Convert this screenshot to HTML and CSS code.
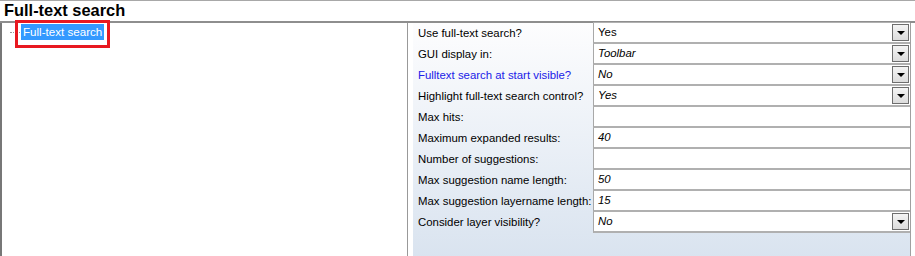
FILE: index.html
```html
<html>
	<head>
		<link rel="stylesheet" href="styles.css">
	</head>
	<body>
		<div class="page">
			<div class="title">Full-text search</div>
			<div class="main">
				<div class="tree">
					<div class="node">
						<span class="dots"></span>
						<span class="mark"><span class="selected">Full-text search</span></span>
					</div>
				</div>
				<div class="props">
					<div class="row">
						<div class="label">Use full-text search?</div>
						<div class="value">Yes<span class="drop"></span></div>
					</div>
					<div class="row">
						<div class="label">GUI display in:</div>
						<div class="value italic">Toolbar<span class="drop"></span></div>
					</div>
					<div class="row">
						<div class="label blue">Fulltext search at start visible?</div>
						<div class="value italic">No<span class="drop"></span></div>
					</div>
					<div class="row">
						<div class="label">Highlight full-text search control?</div>
						<div class="value italic">Yes<span class="drop"></span></div>
					</div>
					<div class="row">
						<div class="label">Max hits:</div>
						<div class="value"></div>
					</div>
					<div class="row">
						<div class="label">Maximum expanded results:</div>
						<div class="value italic">40</div>
					</div>
					<div class="row">
						<div class="label">Number of suggestions:</div>
						<div class="value"></div>
					</div>
					<div class="row">
						<div class="label">Max suggestion name length:</div>
						<div class="value italic">50</div>
					</div>
					<div class="row">
						<div class="label">Max suggestion layername length:</div>
						<div class="value italic">15</div>
					</div>
					<div class="row">
						<div class="label">Consider layer visibility?</div>
						<div class="value italic">No<span class="drop"></span></div>
					</div>
				</div>
			</div>
		</div>
	</body>
</html>
```

FILE: styles.css
```css
body{
	margin: 0;
	font-family: "Liberation Sans", Arial, sans-serif;
	background: #fff;
	color: #000;
}
.page{
	width: 915px;
	height: 256px;
	overflow: hidden;
}
.title{
	height: 20px;
	border-top: 1px solid #a8a8a8;
	border-bottom: 2px solid #8e8e8e;
	font-size: 16.4px;
	font-weight: bold;
	line-height: 19px;
	padding-left: 4px;
}
.main{
	display: flex;
	height: 233px;
}
.tree{
	width: 405px;
	border-left: 2px solid #777;
	border-right: 1px solid #999;
	background: #fff;
}
.node{
	display: flex;
	align-items: flex-start;
	padding-left: 8px;
}
.dots{
	width: 10px;
	border-top: 1px dotted #999;
	margin-top: 9px;
}
.mark{
	position: relative;
	border: 3px solid #e81820;
	padding: 1px 3px 5px 3px;
	margin-top: -3px;
	margin-left: -5px;
}
.selected{
	display: block;
	background: #3399ff;
	color: #fff;
	font-size: 11.6px;
	padding: 0 2px 0 2px;
	line-height: 16px;
}
.props{
	margin-left: 5px;
	width: 497px;
	border-right: 1px solid #a0a0a0;
	background: linear-gradient(#fdfdfe, #d6e1ee);
	height: 256px;
	align-self: flex-start;
}
.row{
	display: flex;
	height: 21px;
}
.label{
	width: 175px;
	padding-left: 5px;
	font-size: 11.4px;
	line-height: 21px;
	white-space: nowrap;
}
.blue{
	color: #2020e8;
}
.value{
	flex: 1;
	position: relative;
	background: #fff;
	border-left: 1px solid #a8a8a8;
	border-bottom: 2px solid #b0b0b0;
	height: 19px;
	font-size: 11.4px;
	line-height: 19px;
	padding-left: 4px;
}
.row:first-child .value{
	border-top: 1px solid #b0b0b0;
	margin-top: -1px;
}
.italic{
	font-style: italic;
}
.drop{
	position: absolute;
	right: 1px;
	top: 1px;
	width: 15px;
	height: 15px;
	border: 1px solid #6e6e6e;
	background: linear-gradient(#f4f4f4, #dcdcdc);
}
.drop:after{
	content: "";
	position: absolute;
	left: 4px;
	top: 6px;
	border-left: 4px solid transparent;
	border-right: 4px solid transparent;
	border-top: 4px solid #000;
}
```
